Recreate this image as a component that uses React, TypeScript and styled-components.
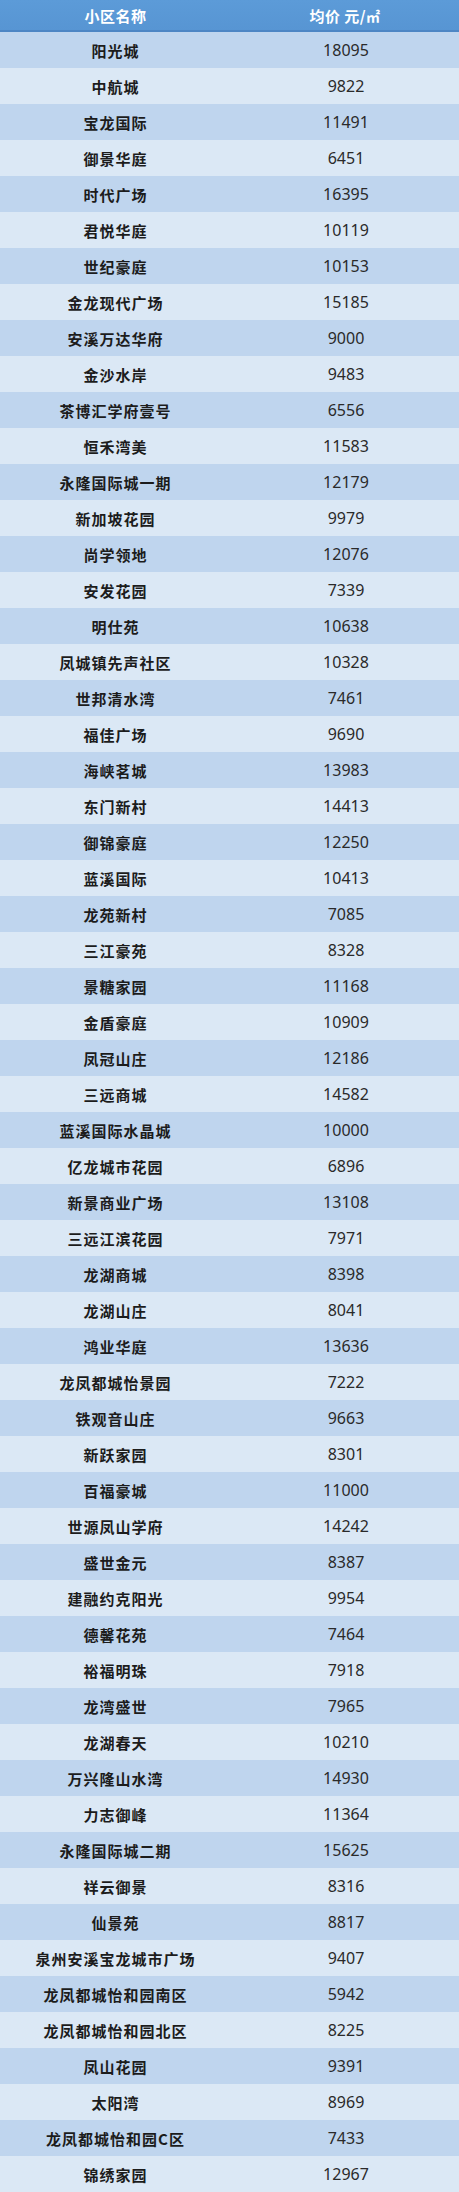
import styled, { createGlobalStyle } from "styled-components";

const GlobalStyle = createGlobalStyle`
  html, body {
    margin: 0;
    padding: 0;
    background: #dbe8f5;
  }
`;

const rows: [string, string][] = [
  ["阳光城", "18095"],
  ["中航城", "9822"],
  ["宝龙国际", "11491"],
  ["御景华庭", "6451"],
  ["时代广场", "16395"],
  ["君悦华庭", "10119"],
  ["世纪豪庭", "10153"],
  ["金龙现代广场", "15185"],
  ["安溪万达华府", "9000"],
  ["金沙水岸", "9483"],
  ["茶博汇学府壹号", "6556"],
  ["恒禾湾美", "11583"],
  ["永隆国际城一期", "12179"],
  ["新加坡花园", "9979"],
  ["尚学领地", "12076"],
  ["安发花园", "7339"],
  ["明仕苑", "10638"],
  ["凤城镇先声社区", "10328"],
  ["世邦清水湾", "7461"],
  ["福佳广场", "9690"],
  ["海峡茗城", "13983"],
  ["东门新村", "14413"],
  ["御锦豪庭", "12250"],
  ["蓝溪国际", "10413"],
  ["龙苑新村", "7085"],
  ["三江豪苑", "8328"],
  ["景糖家园", "11168"],
  ["金盾豪庭", "10909"],
  ["凤冠山庄", "12186"],
  ["三远商城", "14582"],
  ["蓝溪国际水晶城", "10000"],
  ["亿龙城市花园", "6896"],
  ["新景商业广场", "13108"],
  ["三远江滨花园", "7971"],
  ["龙湖商城", "8398"],
  ["龙湖山庄", "8041"],
  ["鸿业华庭", "13636"],
  ["龙凤都城怡景园", "7222"],
  ["铁观音山庄", "9663"],
  ["新跃家园", "8301"],
  ["百福豪城", "11000"],
  ["世源凤山学府", "14242"],
  ["盛世金元", "8387"],
  ["建融约克阳光", "9954"],
  ["德馨花苑", "7464"],
  ["裕福明珠", "7918"],
  ["龙湾盛世", "7965"],
  ["龙湖春天", "10210"],
  ["万兴隆山水湾", "14930"],
  ["力志御峰", "11364"],
  ["永隆国际城二期", "15625"],
  ["祥云御景", "8316"],
  ["仙景苑", "8817"],
  ["泉州安溪宝龙城市广场", "9407"],
  ["龙凤都城怡和园南区", "5942"],
  ["龙凤都城怡和园北区", "8225"],
  ["凤山花园", "9391"],
  ["太阳湾", "8969"],
  ["龙凤都城怡和园C区", "7433"],
  ["锦绣家园", "12967"],
];

const Table = styled.div`
  width: 459px;
  display: flex;
  flex-direction: column;
`;

const HeaderRow = styled.div`
  display: grid;
  grid-template-columns: 231px 1fr;
  height: 30px;
  background: linear-gradient(#5c9bd8, #5795d3);
  border-bottom: 2px solid #4d86c4;
  align-items: center;
`;

const HeaderCell = styled.div`
  text-align: center;
  color: #ffffff;
  font-family: "Noto Sans CJK SC", "Noto Sans", sans-serif;
  font-weight: 700;
  font-size: 15px;
  letter-spacing: 0.5px;
`;

const Sup = styled.span`
  font-size: 14px;
  font-weight: 700;
`;

const Row = styled.div<{ $odd: boolean }>`
  display: grid;
  grid-template-columns: 231px 1fr;
  height: 36px;
  align-items: center;
  background: ${(p) => (p.$odd ? "#bfd5ee" : "#dbe8f5")};
`;

const NameCell = styled.div`
  text-align: center;
  color: #1c1c1c;
  font-family: "Noto Sans CJK SC", sans-serif;
  font-weight: 700;
  font-size: 15px;
  letter-spacing: 1px;
`;

const PriceCell = styled.div`
  text-align: center;
  padding-left: 2px;
  color: #2a2a2a;
  font-family: "Noto Sans", "Noto Sans CJK SC", sans-serif;
  font-weight: 400;
  font-size: 16px;
`;

export default function App() {
  return (
    <>
      <GlobalStyle />
      <Table>
        <HeaderRow>
          <HeaderCell>小区名称</HeaderCell>
          <HeaderCell>
            均价 元/<Sup>㎡</Sup>
          </HeaderCell>
        </HeaderRow>
        {rows.map(([name, price], i) => (
          <Row key={name} $odd={i % 2 === 0}>
            <NameCell>{name}</NameCell>
            <PriceCell>{price}</PriceCell>
          </Row>
        ))}
      </Table>
    </>
  );
}
